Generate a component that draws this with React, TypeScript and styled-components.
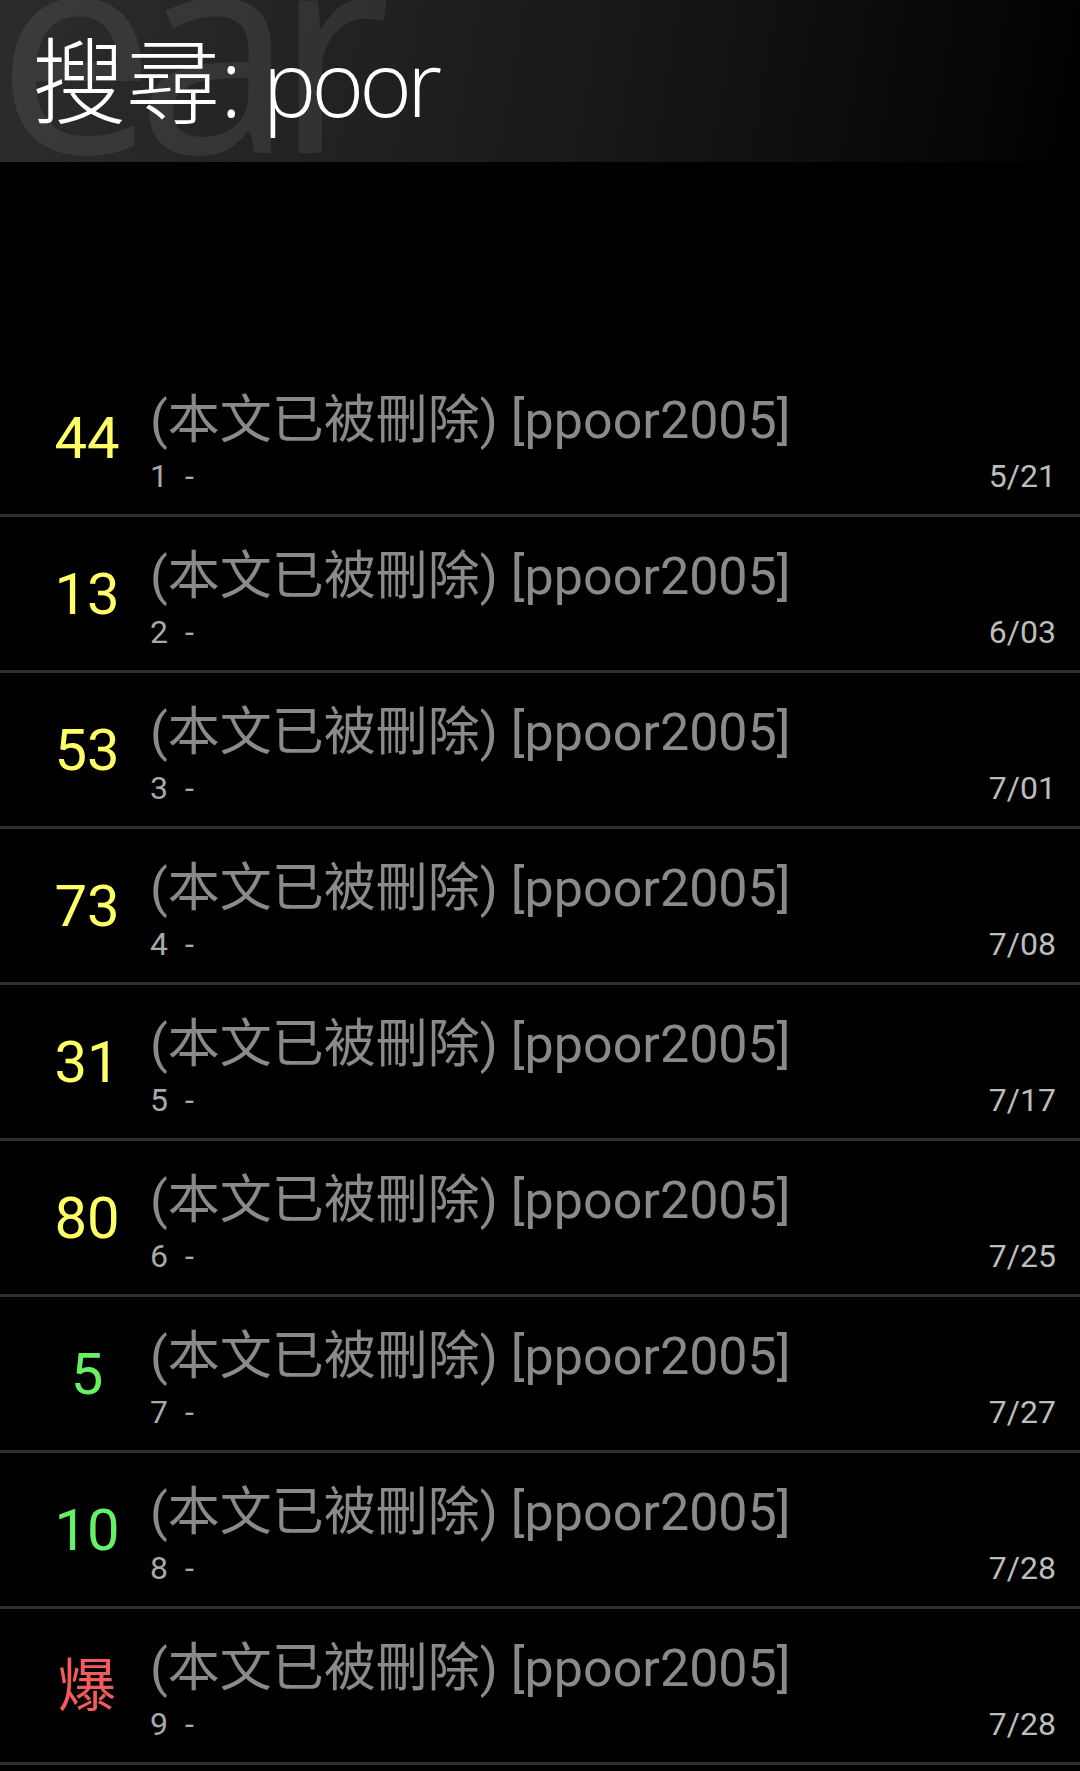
import styled, { createGlobalStyle } from "styled-components";

const GlobalStyle = createGlobalStyle`
  html, body {
    margin: 0;
    padding: 0;
    background: #000;
  }
`;

type Post = {
  score: string;
  tone: "hot" | "warm" | "cool";
  index: number;
  date: string;
};

const posts: Post[] = [
  { score: "44", tone: "warm", index: 1, date: "5/21" },
  { score: "13", tone: "warm", index: 2, date: "6/03" },
  { score: "53", tone: "warm", index: 3, date: "7/01" },
  { score: "73", tone: "warm", index: 4, date: "7/08" },
  { score: "31", tone: "warm", index: 5, date: "7/17" },
  { score: "80", tone: "warm", index: 6, date: "7/25" },
  { score: "5", tone: "cool", index: 7, date: "7/27" },
  { score: "10", tone: "cool", index: 8, date: "7/28" },
  { score: "爆", tone: "hot", index: 9, date: "7/28" },
];

const toneColor = {
  hot: "#f25c5c",
  warm: "#ffff66",
  cool: "#66f066",
};

const Page = styled.div`
  width: 1080px;
  min-height: 1771px;
  background: #000;
  font-family: Roboto, "Noto Sans CJK TC", sans-serif;
`;

const Header = styled.header`
  position: relative;
  height: 162px;
  overflow: hidden;
  padding: 34px 0 0 32px;
  box-sizing: border-box;
  background: linear-gradient(100deg, #2c2c2c 0%, #1d1d1d 45%, #0e0e0e 75%, #000 100%);
`;

/* faded backdrop word behind the title */
const Watermark = styled.div`
  position: absolute;
  left: -4px;
  top: -100px;
  font-family: "Open Sans", sans-serif;
  font-size: 285px;
  line-height: 1;
  letter-spacing: -20px;
  color: rgba(255, 255, 255, 0.075);
  user-select: none;
`;

const HeaderTitle = styled.h1`
  position: relative;
  margin: 0;
  font-family: "Open Sans", "Noto Sans CJK TC", sans-serif;
  font-weight: 300;
  font-size: 94px;
  line-height: 1;
  color: #fff;
  white-space: nowrap;
`;

const Query = styled.span`
  margin-left: -4px;
  letter-spacing: -5px;
  font-size: 90px;
`;

const Spacer = styled.div`
  height: 199px;
`;

const List = styled.ul`
  list-style: none;
  margin: 0;
  padding: 0;
`;

const Row = styled.li`
  display: flex;
  align-items: center;
  height: 153px;
  padding: 0 24px 0 24px;
  border-bottom: 3px solid #2f2f2f;
`;

const Score = styled.div<{ $tone: Post["tone"] }>`
  width: 126px;
  flex-shrink: 0;
  text-align: center;
  font-size: 58px;
  line-height: 1;
  color: ${(p) => toneColor[p.$tone]};
`;

const Body = styled.div`
  flex: 1;
  display: flex;
  flex-direction: column;
  align-self: stretch;
  padding-top: 32px;
`;

const Title = styled.div`
  font-size: 52px;
  line-height: 56px;
  color: #8a8a8a;
  white-space: nowrap;
`;

const Meta = styled.div`
  display: flex;
  justify-content: space-between;
  margin-top: 9px;
  font-size: 32px;
  line-height: 36px;
`;

const Index = styled.span`
  color: #a9a9a9;
  word-spacing: 9px;
`;

const Date = styled.span`
  color: #bdbdbd;
`;

export default function App() {
  return (
    <Page>
      <GlobalStyle />
      <Header>
        <Watermark>ear</Watermark>
        <HeaderTitle>
          搜尋: <Query>poor</Query>
        </HeaderTitle>
      </Header>
      <Spacer />
      <List>
        {posts.map((post) => (
          <Row key={post.index}>
            <Score $tone={post.tone}>{post.score}</Score>
            <Body>
              <Title>(本文已被刪除) [ppoor2005]</Title>
              <Meta>
                <Index>{post.index} -</Index>
                <Date>{post.date}</Date>
              </Meta>
            </Body>
          </Row>
        ))}
      </List>
    </Page>
  );
}
